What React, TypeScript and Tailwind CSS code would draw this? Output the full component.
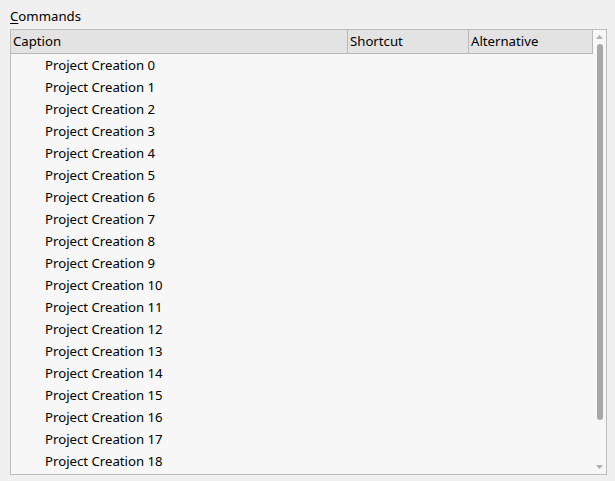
import React from "react";

export default function App() {
  const rows = Array.from({ length: 19 }, (_, i) => `Project Creation ${i}`);
  return (
    <div className="w-[615px] h-[481px] bg-[#f0f0f0] text-black overflow-hidden" style={{ fontFamily: '"Noto Sans", "Open Sans", sans-serif' }}>
      <div className="h-[29px] pl-[10px] pt-[6px] text-[13.2px] leading-[20px]">
        <span className="underline underline-offset-2">C</span>ommands
      </div>
      <div className="ml-[10px] w-[597px] h-[446px] border border-[#bcbcbc] bg-[#f7f7f7] flex">
        <div className="flex-1 flex flex-col min-w-0">
          <div className="h-[24px] bg-[#e3e3e3] border-r border-b border-[#b8b8b8] flex text-[13.2px] leading-[22px]">
            <div className="w-[337px] pl-[2px] border-r border-[#b8b8b8]">Caption</div>
            <div className="w-[121px] pl-[2px] border-r border-[#b8b8b8]">Shortcut</div>
            <div className="flex-1 pl-[2px]">Alternative</div>
          </div>
          <div className="flex flex-col">
            {rows.map((r) => (
              <div key={r} className="h-[22px] pl-[34px] text-[13.2px] leading-[22px]">{r}</div>
            ))}
          </div>
        </div>
        <div className="w-[13px] flex flex-col items-center pt-[5px] pb-[5px]">
          <svg width="7" height="4" viewBox="0 0 7 4">
            <polygon points="3.5,0 7,4 0,4" fill="#b0b0b0" />
          </svg>
          <div className="mt-[5px] w-[6px] h-[376px] rounded-full bg-[#a8a8a8]" />
          <div className="flex-1" />
          <svg width="7" height="4" viewBox="0 0 7 4">
            <polygon points="0,0 7,0 3.5,4" fill="#b0b0b0" />
          </svg>
        </div>
      </div>
    </div>
  );
}
